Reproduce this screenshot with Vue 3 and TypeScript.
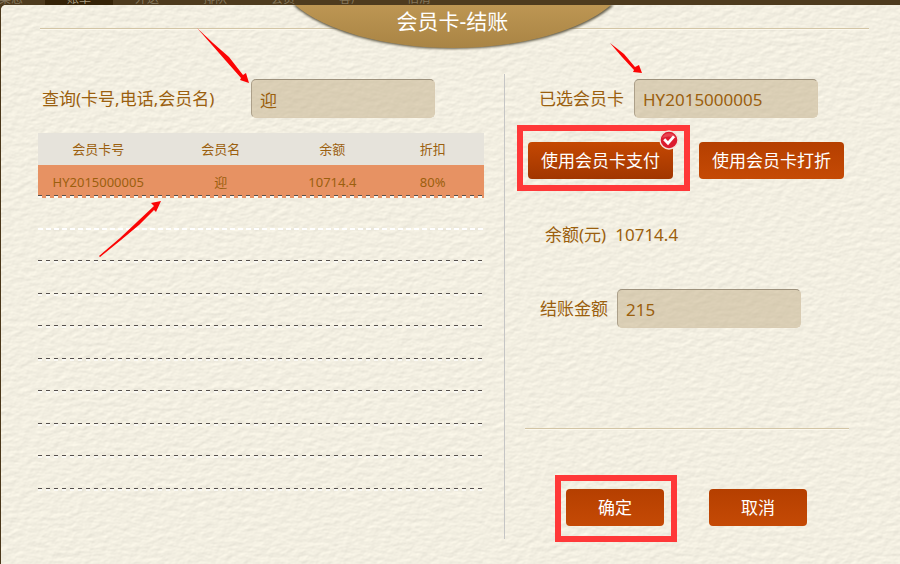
<script setup lang="ts">
import { ref } from 'vue'

interface Member {
  card: string
  name: string
  balance: string
  discount: string
}

const tabs: string[] = ['桌态', '账单', '外送', '排队', '会员', '客户', '估清']
const members: Member[] = [
  { card: 'HY2015000005', name: '迎', balance: '10714.4', discount: '80%' },
]
const blankRows = 9

const query = ref('迎')
const selectedCard = ref('HY2015000005')
const amount = ref('215')
</script>

<template>
  <div class="page">
    <nav class="tabs">
      <span v-for="(tab, i) in tabs" :key="tab" class="tab" :class="{ active: i === 1 }">{{ tab }}</span>
    </nav>

    <main class="dialog">
      <svg class="paper" aria-hidden="true">
        <filter id="grain" x="0" y="0" width="100%" height="100%" color-interpolation-filters="sRGB">
          <feTurbulence type="fractalNoise" baseFrequency="0.12 0.2" numOctaves="4" seed="8" result="noise" />
          <feDiffuseLighting in="noise" lighting-color="#fffbed" surfaceScale="0.2" diffuseConstant="1.12">
            <feDistantLight azimuth="240" elevation="58" />
          </feDiffuseLighting>
        </filter>
        <rect width="100%" height="100%" filter="url(#grain)" />
      </svg>

      <header class="heading">
        <svg class="crest" viewBox="0 0 330 52" aria-hidden="true">
          <defs>
            <linearGradient id="gold" x1="0" y1="0" x2="0" y2="1">
              <stop offset="0" stop-color="#bd9653" />
              <stop offset="1" stop-color="#a98444" />
            </linearGradient>
            <filter id="soft" x="-5%" y="-10%" width="110%" height="130%">
              <feGaussianBlur stdDeviation="1.3" />
            </filter>
          </defs>
          <path d="M5 0C34 26 94 44 165 44S297 26 326 0Z" fill="#66604e" filter="url(#soft)" />
          <path d="M7 0C36 25 96 43 165 43S294 25 323 0Z" fill="url(#gold)" />
        </svg>
        <h1>会员卡-结账</h1>
      </header>

      <div class="content">
        <section class="lookup">
          <div class="field search">
            <label for="query">查询(卡号,电话,会员名)</label>
            <input id="query" v-model="query" type="text" />
          </div>
          <table>
            <thead>
              <tr>
                <th class="c-card">会员卡号</th>
                <th class="c-name">会员名</th>
                <th class="c-balance">余额</th>
                <th class="c-discount">折扣</th>
              </tr>
            </thead>
            <tbody>
              <tr v-for="m in members" :key="m.card" class="selected">
                <td>{{ m.card }}</td>
                <td>{{ m.name }}</td>
                <td>{{ m.balance }}</td>
                <td>{{ m.discount }}</td>
              </tr>
              <tr v-for="n in blankRows" :key="n" :class="{ pale: n === 1 }">
                <td colspan="4"></td>
              </tr>
            </tbody>
          </table>
        </section>

        <section class="payment">
          <div class="field card">
            <label for="card">已选会员卡</label>
            <input id="card" v-model="selectedCard" type="text" />
          </div>
          <div class="modes">
            <div class="marked mode-mark">
              <button type="button" class="pressed">使用会员卡支付</button>
              <svg class="check" viewBox="0 0 20 20" aria-hidden="true">
                <circle cx="10" cy="10" r="9" fill="#dc1c2e" stroke="#f4e2d8" stroke-width="1.4" />
                <path d="M3 8a7.5 7.5 0 0 1 14 0Q10 5 3 8Z" fill="#f0606a" opacity=".6" />
                <path d="M5.2 9.2L9 13.2L15 6.4" fill="none" stroke="#fff" stroke-width="2.8" />
              </svg>
            </div>
            <button type="button">使用会员卡打折</button>
          </div>
          <p class="balance"><span>余额(元)</span><span>10714.4</span></p>
          <div class="field amount">
            <label for="amount">结账金额</label>
            <input id="amount" v-model="amount" type="text" />
          </div>
          <hr />
          <div class="actions">
            <div class="marked confirm-mark"><button type="button">确定</button></div>
            <button type="button">取消</button>
          </div>
        </section>
      </div>
    </main>

    <svg class="arrows" width="900" height="564" viewBox="0 0 900 564" aria-hidden="true">
      <path d="M197 28L213 43L229 57L243 75L246 73L249 83L240 80L241 78L226 61L212 45Z" />
      <path d="M610 43L624 54L635 67L639 65L642 73L633 72L634 70L622 57Z" />
      <path d="M99 256L120 238L137 222L154 206L151 203L161 201L156 212L154 210L139 225L121 240L100 257Z" />
    </svg>
  </div>
</template>

<style>
body {
  margin: 0;
  background: #4b381b;
}
</style>

<style scoped>
.page {
  position: relative;
  display: flex;
  flex-direction: column;
  min-height: 100vh;
  overflow: hidden;
  box-sizing: border-box;
  padding-left: 1px;
  color: #9b5f0e;
  font-family: "Noto Sans", "Noto Sans CJK SC", sans-serif;
  font-size: 17px;
  line-height: 24px;
}

.tabs {
  display: flex;
  height: 5px;
  margin-left: -24px;
  overflow: hidden;
  background: #4e3b1e;
}

.tab {
  display: flex;
  align-items: flex-end;
  justify-content: center;
  width: 68px;
  color: #85775c;
  font-size: 12px;
  line-height: 12px;
}

.tab.active {
  background: #352307;
  color: #a99c80;
}

.dialog {
  position: relative;
  flex: 1;
  overflow: hidden;
  border-radius: 5px 0 0 0;
  background: #f1ecdd;
}

.paper {
  position: absolute;
  inset: 0;
  width: 100%;
  height: 100%;
}

.heading {
  position: relative;
  display: flex;
  justify-content: center;
  height: 69px;
  padding-left: 4px;
}

.heading::before {
  content: "";
  position: absolute;
  top: 23px;
  left: 39px;
  right: 31px;
  height: 1px;
  background: #d3c5a5;
  box-shadow: 0 1px #fbf8ee;
}

.crest {
  position: absolute;
  top: 0;
  width: 330px;
  height: 52px;
}

h1 {
  position: relative;
  margin: 3px 0 0;
  color: #fff;
  font-size: 21px;
  font-weight: 400;
  line-height: 26px;
}

.content {
  position: relative;
  display: flex;
  padding: 0 31px 0 37px;
}

.lookup {
  flex: 446;
  box-sizing: border-box;
  height: 465px;
  padding-right: 20px;
  border-right: 1px solid #c5c5c5;
}

.payment {
  flex: 344;
  box-sizing: border-box;
  padding-left: 20px;
}

.field {
  display: flex;
  align-items: center;
  padding-top: 5px;
}

input {
  box-sizing: border-box;
  width: 184px;
  height: 39px;
  padding: 2px 8px 0;
  border: 1px solid #d9ccb3;
  border-top-color: #9c907b;
  border-left-color: #aca08a;
  border-radius: 5px;
  background: rgba(196, 178, 142, 0.53);
  color: inherit;
  font: inherit;
  outline: none;
}

.search {
  justify-content: space-between;
  padding-right: 49px;
  padding-left: 4px;
}

table {
  width: 100%;
  margin-top: 15px;
  border-collapse: collapse;
  table-layout: fixed;
  font-size: 13px;
  line-height: 18px;
}

th,
td {
  padding: 0;
  font-weight: 400;
  text-align: center;
}

thead tr {
  height: 32px;
  background: #e6e3db;
}

.c-card {
  width: 27%;
}

.c-name {
  width: 28%;
}

.c-balance {
  width: 22%;
}

tbody tr {
  height: 33px;
  background:
    repeating-linear-gradient(90deg, #56504c 0 4px, transparent 4px 8px) 0 calc(100% - 2px) / 100% 1px no-repeat,
    repeating-linear-gradient(90deg, #fbfaf5 0 4px, transparent 4px 8px) 0 100% / 100% 2px no-repeat;
}

tbody tr:nth-child(2),
tbody tr:nth-child(n + 5):nth-child(odd) {
  height: 32px;
}

tbody tr.selected {
  background-color: #e79263;
}

tbody tr.pale {
  background:
    repeating-linear-gradient(90deg, #ffffff 0 5px, transparent 5px 8px) 0 100% / 100% 2px no-repeat;
}

.card {
  gap: 10px;
  padding-left: 14px;
}

.modes {
  display: flex;
  gap: 26px;
  padding: 24px 0 0 3px;
}

button {
  width: 145px;
  height: 37px;
  padding: 0;
  border: 0;
  border-radius: 4px;
  background: linear-gradient(#b53f00, #c54a05);
  color: #fff;
  font: inherit;
}

button.pressed {
  background: linear-gradient(#c54802, #a13600);
}

.marked {
  position: relative;
  display: flex;
}

.marked::before {
  content: "";
  position: absolute;
  border: 6px solid #ff3838;
  pointer-events: none;
}

.mode-mark::before {
  inset: -17px -17px -12px -11px;
}

.confirm-mark::before {
  inset: -14px -13px -16px -11px;
}

.check {
  position: absolute;
  top: -12px;
  right: -6px;
  width: 20px;
  height: 20px;
}

.balance {
  display: flex;
  gap: 9px;
  margin: 44px 0 0;
  padding-left: 20px;
}

.amount {
  gap: 9px;
  padding-left: 15px;
  margin-top: 37px;
}

hr {
  height: 1px;
  margin: 100px 20px 0 0;
  border: 0;
  background: #d3c5a5;
  box-shadow: 0 1px #fbf8ee;
}

.actions {
  display: flex;
  gap: 45px;
  padding: 60px 0 0 41px;
}

.actions button {
  width: 98px;
}

.arrows {
  position: absolute;
  top: 0;
  left: 0;
  fill: #fb0404;
  pointer-events: none;
}
</style>
